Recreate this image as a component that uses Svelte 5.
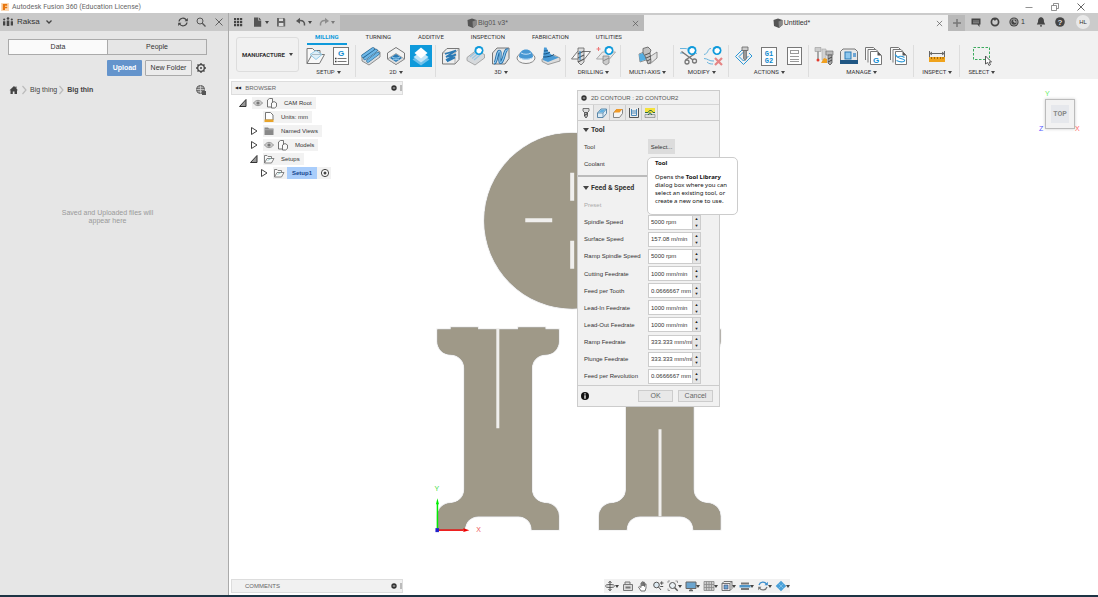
<script lang="ts">
	type Tool = { icon: string; label: string; active?: boolean };
	type Group = { name: string; tools: Tool[] };

	let ribbonTab = $state('MILLING');
	let dialogTab = $state('tool');
	let dataTab = $state('Data');

	const ribbonTabs = ['MILLING', 'TURNING', 'ADDITIVE', 'INSPECTION', 'FABRICATION', 'UTILITIES'];

	const groups: Group[] = [
		{ name: 'SETUP', tools: [{ icon: 'setup', label: 'New setup' }, { icon: 'ncProgram', label: 'NC program' }] },
		{
			name: '2D',
			tools: [
				{ icon: 'face', label: 'Face' },
				{ icon: 'pocket', label: '2D pocket' },
				{ icon: 'contour', label: '2D contour', active: true }
			]
		},
		{
			name: '3D',
			tools: [
				{ icon: 'adaptive', label: 'Adaptive clearing' },
				{ icon: 'flat', label: 'Flat' },
				{ icon: 'parallel', label: 'Parallel' },
				{ icon: 'dome', label: 'Contour' },
				{ icon: 'ramp', label: 'Ramp' }
			]
		},
		{ name: 'DRILLING', tools: [{ icon: 'drill', label: 'Drill' }, { icon: 'holes', label: 'Hole recognition' }] },
		{ name: 'MULTI-AXIS', tools: [{ icon: 'swarf', label: 'Swarf' }] },
		{ name: 'MODIFY', tools: [{ icon: 'trim', label: 'Trim' }, { icon: 'deletePass', label: 'Delete passes' }] },
		{
			name: 'ACTIONS',
			tools: [
				{ icon: 'simulate', label: 'Simulate' },
				{ icon: 'post', label: 'Post process' },
				{ icon: 'sheet', label: 'Setup sheet' }
			]
		},
		{
			name: 'MANAGE',
			tools: [
				{ icon: 'toolLibrary', label: 'Tool library' },
				{ icon: 'machine', label: 'Machine library' },
				{ icon: 'postLibrary', label: 'Post library' },
				{ icon: 'template', label: 'Template library' }
			]
		},
		{ name: 'INSPECT', tools: [{ icon: 'measure', label: 'Measure' }] },
		{ name: 'SELECT', tools: [{ icon: 'select', label: 'Select' }] }
	];

	const tree = [
		{ name: 'CAM Root', level: 0, arrow: 'open', icons: ['eye', 'component'] },
		{ name: 'Units: mm', level: 1, arrow: '', icons: ['units'] },
		{ name: 'Named Views', level: 1, arrow: 'closed', icons: ['folder'] },
		{ name: 'Models', level: 1, arrow: 'closed', icons: ['eye', 'component'] },
		{ name: 'Setups', level: 1, arrow: 'open', icons: ['folderOpen'] },
		{ name: 'Setup1', level: 2, arrow: 'closed', icons: ['folderOpen'], selected: true }
	];

	const dialogTabs = ['tool', 'geometry', 'heights', 'passes', 'linking'];

	const feeds = [
		['Spindle Speed', '5000 rpm'],
		['Surface Speed', '157.08 m/min'],
		['Ramp Spindle Speed', '5000 rpm'],
		['Cutting Feedrate', '1000 mm/min'],
		['Feed per Tooth', '0.0666667 mm'],
		['Lead-In Feedrate', '1000 mm/min'],
		['Lead-Out Feedrate', '1000 mm/min'],
		['Ramp Feedrate', '333.333 mm/min'],
		['Plunge Feedrate', '333.333 mm/min'],
		['Feed per Revolution', '0.0666667 mm']
	];

	const navTools = [
		{ icon: 'orbit', label: 'Orbit', menu: true },
		{ icon: 'lookAt', label: 'Look at', menu: false },
		{ icon: 'pan', label: 'Pan', menu: false },
		{ icon: 'zoom', label: 'Zoom', menu: false },
		{ icon: 'fit', label: 'Fit', menu: true },
		{ icon: 'display', label: 'Display settings', menu: true },
		{ icon: 'grid', label: 'Grid and snaps', menu: true },
		{ icon: 'viewports', label: 'Viewports', menu: true },
		{ icon: 'stock', label: 'Stock', menu: true },
		{ icon: 'refresh', label: 'Regenerate', menu: true },
		{ icon: 'shade', label: 'Shading', menu: true }
	];

	const globe =
		'<circle cx="14" cy="5.500" r="4.500" fill="#0f9adb"/><path d="M11.500 4.500l2-1.500 2.500 .5 1 2-1.500 2.500-2 .5-2-1.500z" fill="#fff"/>';

	// 22 x 22 ribbon icons
	const big: Record<string, string> = {
		setup:
			'<path d="M2 18.500V3.500h5.500l2 2h5.500v3M2 18.500l5-9h12.500l-5 9z" fill="#f8f8f8" stroke="#777"/><path d="M5 9.500l6-4 6 4-6 5z" fill="#cfeaf8" fill-opacity=".6" stroke="#7cc1e4" stroke-width=".8"/>',
		ncProgram:
			'<rect x="3.500" y="2.500" width="15" height="17" fill="#fdfdfd" stroke="#777"/><text x="11" y="10.500" text-anchor="middle" font-family="Liberation Sans" font-weight="700" font-size="8" fill="#0f8ad0">G</text><path d="M7.500 13.500h9M7.500 16.500h9" stroke="#777"/><path d="M5 13.500h1.500M5 16.500h1.500" stroke="#333" stroke-width="1.500"/>',
		face:
			'<path d="M2 12l12-9 6 4v5l-11 8-7-4z" fill="#d9dde0" stroke="#777" stroke-width=".8"/><path d="M3 11L13 4M5 13.500l11-8M8 16l10-7.500" stroke="#1b5e8c" stroke-width="3.400" stroke-linecap="round"/><path d="M3 11L13 4M5 13.500l11-8M8 16l10-7.500" stroke="#6db6e6" stroke-width="2.200" stroke-linecap="round"/>',
		pocket:
			'<path d="M11 2.500l8.500 5.500v6L11 19.500 2.500 14V8z" fill="#f2f2f2" stroke="#777"/><path d="M2.500 14L11 8.500l8.500 5.500L11 19.500z" fill="#e0e0e0" stroke="#888" stroke-width=".7"/><path d="M5 13l6-4 6 4-6 4z" fill="#2a7ab5"/><path d="M7 12c2.500 1.500 5.500 1.500 8 0M8 14c2 1 4 1 6 0" stroke="#9fd2f2" fill="none"/>',
		contour:
			'<path d="M11 8.500l8.500 6-8.500 6-8.500-6z" fill="#6fc0ea"/><path d="M11 6.500l7.500 5.500-7.500 5.500L3.500 12z" fill="#c3e5f7"/><path d="M11 2.500l6.500 5.500-6.500 5.500L4.500 8z" fill="#fff"/>',
		adaptive:
			'<path d="M2.500 8L7 3.500h12v11L15 19H2.500z" fill="#eee" stroke="#777"/><path d="M15 19V8H2.500M15 8l4-4.500" fill="none" stroke="#999" stroke-width=".7"/><path d="M5 9l11-3.500L6 12l10-2.500L6 15l9-2.500-8 4" fill="none" stroke="#2a7ab5" stroke-width="1.600"/>',
		flat:
			'<path d="M2 12.500l9-7 8.500 4v3.500L10 20l-8-4.500z" fill="#d6d9dc" stroke="#999" stroke-width=".8"/><path d="M5 12l6-5M7 13.500l6-5M9 15l6-5" stroke="#9cc5e0" stroke-width="1.200"/>' + globe,
		parallel:
			'<path d="M2.500 8L7 3h12v10.500L15 19H2.500z" fill="#e3e3e3" stroke="#777"/><path d="M4 18c2 0 2-3 3-7s2-6 3-4-1 8 0 10 3-2 4-6 2-7 4-6" fill="none" stroke="#1f6aa5" stroke-width="3"/><path d="M4 18c2 0 2-3 3-7s2-6 3-4-1 8 0 10 3-2 4-6 2-7 4-6" fill="none" stroke="#8cc7ee" stroke-width="1.300"/>',
		dome:
			'<ellipse cx="11" cy="13" rx="9" ry="5.500" fill="#f5f5f5" stroke="#888"/><path d="M4 12C4 2 18 2 18 12c-2 3.500-12 3.500-14 0z" fill="#4697d3"/><path d="M6 8c3 1.700 7 1.700 10 0M4 12.500c4 2.300 10 2.300 14 0" fill="none" stroke="#cfe8f8" stroke-width=".9"/>',
		ramp:
			'<path d="M2 14l12-4 6 3v3l-12 3.500-6-3z" fill="#dcdcdc" stroke="#888" stroke-width=".8"/><path d="M4 2.500h2.500C8 8 12 11 19 12.500L8 17l-5-2z" fill="#4a9bd6"/><path d="M4 6c2 0 3.500-.5 4-1M3.500 9c3 0 5.500-1 6.500-2M3 12c4 .3 9-1 11-2.500" fill="none" stroke="#14507e"/>',
		drill:
			'<path d="M1.500 14l6-7.500h13l-6 7.500z" fill="#f6f6f6" stroke="#777"/><path d="M8 3h6v14l-3 3-3-3z" fill="#dcdcdc" stroke="#666" stroke-width=".8"/><path d="M8 9l6-3M8 13l6-3M8 17l6-3" stroke="#555" stroke-width="1.100"/><path d="M10 6v9" stroke="#2f89c8" stroke-width="1.200"/>',
		holes:
			'<path d="M1.500 14l6-7h13l-6 7z" fill="#e9e9e9" stroke="#aaa"/><path d="M8 11h6v7l-3 2-3-2z" fill="#ccc" stroke="#888" stroke-width=".8"/><path d="M8 16l6-3" stroke="#888"/><path d="M1.500 4h4M3.500 2v4" stroke="#e77"/>' + globe,
		swarf:
			'<path d="M2 9l5-2 7 4 6-4v6l-7 6-4-4-6 2z" fill="#e3e3e3" stroke="#777" stroke-width=".8"/><path d="M2 9.500l5-2 4 4-2 3-6 2z" fill="#55aee2"/><path d="M6 3.500L11 2l3 3-1 3 1 9-3 2-3-8-2-3z" fill="#c2c2c2" stroke="#666" stroke-width=".9"/><path d="M8 10l5-2M9 13l5-2M10 16l4-2" stroke="#555"/>',
		trim:
			'<path d="M2 3.500h5c5 0 5 4 12 5M2 8h4" fill="none" stroke="#69b4dd"/><path d="M3.500 6.500L15 15M16.500 9L7.500 15" stroke="#777" stroke-width="1.500"/><circle cx="9" cy="17" r="2" fill="none" stroke="#777" stroke-width="1.300"/><circle cx="16.500" cy="16" r="2" fill="none" stroke="#777" stroke-width="1.300"/>' + globe,
		deletePass:
			'<path d="M8 3.500c-4 0-2 5-7 6M1 13.500c4 0 5 3 10 2.500M4 17c2 2 4 2 6 2" fill="none" stroke="#69b4dd"/><path d="M12 13l7 7M19 13l-7 7" stroke="#e58585" stroke-width="2.200"/>' + globe,
		simulate:
			'<path d="M2.500 11.500l9-9M2.500 11.500l8 8 8.500-8.500-3-3" fill="none" stroke="#2c97d6"/><path d="M6 11.500l5-5M6 11.500l4.500 4.500 5-5" fill="none" stroke="#2c97d6"/><path d="M9 2h6v3.500H9z" fill="#ccc" stroke="#666" stroke-width=".8"/><path d="M10.500 5.500h3v8L12 15.500l-1.500-2z" fill="#999" stroke="#666" stroke-width=".7"/>',
		post:
			'<rect x="3.500" y="2.500" width="15" height="18" fill="#fdfdfd" stroke="#777"/><text x="11" y="10.500" text-anchor="middle" font-family="Liberation Mono" font-weight="700" font-size="7" fill="#0f8ad0">G1</text><text x="11" y="17.500" text-anchor="middle" font-family="Liberation Mono" font-weight="700" font-size="7" fill="#0f8ad0">G2</text>',
		sheet:
			'<rect x="4.500" y="2.500" width="14" height="17" fill="#fdfdfd" stroke="#777"/><rect x="7.500" y="5.500" width="8" height="3" fill="none" stroke="#999"/><path d="M7 11.500h9M7 14.500h9M7 16.500h9" stroke="#999"/>',
		toolLibrary:
			'<path d="M2 2.500h6v4H2z" fill="#ccc" stroke="#999" stroke-width=".6"/><path d="M5 6.500v8" stroke="#777" stroke-width="1.200"/><circle cx="5" cy="15" r="1.500" fill="#e23c2e"/><path d="M9 4h4v11H9z" fill="#d2d2d2" stroke="#aaa" stroke-width=".6"/><path d="M8 18l3-5 3 1v4z" fill="#f0a020"/><path d="M13 6h7v4h-7z" fill="#bbb" stroke="#777" stroke-width=".7"/><path d="M15 10h4v8l-2 2-2-2z" fill="#aaa" stroke="#555" stroke-width=".8"/><path d="M15 14l4-2M15 17l4-2" stroke="#444"/>',
		machine:
			'<path d="M2.500 16V6.500L5 4h12l2.500 2.500V16z" fill="#e8e8e8" stroke="#777"/><rect x="7" y="7" width="6" height="7" fill="#8cc7ee" stroke="#2a7ab5"/><rect x="15" y="8" width="3" height="4" fill="#6da5d3"/><path d="M2 15h18v4H2z" fill="#1f5684"/>',
		postLibrary:
			'<path d="M2.500 15V2.500h8L13 5M5 17.500V4.500h8l2 2" fill="#fafafa" stroke="#777"/><path d="M7.500 6.500h7l4 4v9h-11z" fill="#fff" stroke="#777"/><path d="M14.500 6.500l4 4h-4z" fill="#555"/><text x="13" y="18" text-anchor="middle" font-family="Liberation Sans" font-weight="700" font-size="8" fill="#0f8ad0">G</text>',
		template:
			'<path d="M2.500 15V2.500h8L13 5M5 17.500V4.500h8l2 2" fill="#fafafa" stroke="#777"/><path d="M7.500 6.500h7l4 4v9h-11z" fill="#fff" stroke="#777"/><path d="M14.500 6.500l4 4h-4z" fill="#555"/><path d="M16.500 12.500c-3-2-7-1.500-6 0s5 1 6 2.500-3 3-8 .5M7 9.500l3 3" fill="none" stroke="#2c97d6" stroke-width="1.100"/>',
		measure:
			'<path d="M3.500 6v6M18.500 6v6M4 8.500h14M6 7l-2 1.500 2 1.500M16 7l2 1.500-2 1.500" fill="none" stroke="#666"/><path d="M3 12h16v5H3z" fill="#f0a31c"/><path d="M5.500 12v2M8.500 12v2M11.500 12v2M14.500 12v2M17 12v2" stroke="#a36808"/>',
		select:
			'<rect x="2.500" y="2.500" width="16" height="12" fill="none" stroke="#3cab5e" stroke-dasharray="2.500 1.500"/><path d="M14.500 11v8l2-1.500 1.500 3 1.500-1-1.500-2.500h2.500z" fill="#fff" stroke="#444" stroke-width=".9"/>'
	};

	// 12 x 12 icons of the panels and bars
	const small: Record<string, string> = {
		people:
			'<circle cx="6" cy="2.500" r="1.300"/><circle cx="2.200" cy="3.500" r="1.100"/><circle cx="9.800" cy="3.500" r="1.100"/><path d="M4.700 4.500h2.600V10H4.700zM1 5.200h2.300V9.500H1zM8.700 5.200H11v4.300H8.700z"/>',
		sync:
			'<path d="M2 5.500A4 4 0 0 1 9.300 4M10 6.500A4 4 0 0 1 2.700 8" fill="none" stroke="#444" stroke-width="1.200"/><path d="M10.800 2v3.200H7.600zM1.200 10V6.800h3.200z"/>',
		search: '<circle cx="5" cy="5" r="3" fill="none" stroke="#555"/><path d="M7.300 7.300L10.500 10.500" stroke="#555" stroke-width="1.300"/>',
		close: '<path d="M2.500 2.500l7 7M9.500 2.500l-7 7" stroke="#555" stroke-width=".9"/>',
		chevron: '<path d="M3.500 4.500l2.500 2.500 2.500-2.500" fill="none" stroke="#444" stroke-width="1.300"/>',
		gear:
			'<circle cx="6" cy="6" r="3.300" fill="none" stroke="#444" stroke-width="1.300"/><circle cx="6" cy="6" r="1" /><path d="M6 1v2M6 9v2M1 6h2M9 6h2M2.500 2.500l1.300 1.300M8.200 8.200l1.300 1.300M9.500 2.500L8.200 3.800M3.800 8.200L2.500 9.500" stroke="#444" stroke-width="1.300"/>',
		home: '<path d="M6 2L1.500 6.200h1V10h2.300V7.500h1.700V10h2.500V6.200H10L8.500 4.700V2.500H7.500v1z"/>',
		next: '<path d="M4.500 2l3.500 4-3.500 4" fill="none" stroke="#bbb" stroke-width="1.200"/>',
		world:
			'<circle cx="5.500" cy="5.500" r="4" fill="#777" stroke="#555"/><path d="M1.500 5.500h8M5.500 1.500v8M2.500 3.200h6M2.500 7.800h6" stroke="#ddd" stroke-width=".7"/><path d="M7 7h4v4H7z" fill="#555"/>',
		apps: '<path d="M2 2h2.200v2.200H2zM5 2h2.200v2.200H5zM8 2h2.200v2.200H8zM2 5h2.200v2.200H2zM5 5h2.200v2.200H5zM8 5h2.200v2.200H8zM2 8h2.200v2.200H2zM5 8h2.200v2.200H5zM8 8h2.200v2.200H8z"/>',
		file: '<path d="M2 1.500h4.200v3h3v6.300H2z" fill="#555"/><path d="M6.900 1.500l2.300 2.300H6.900z"/>',
		save: '<path d="M2 2h7.200l1 1v7.500H2z" fill="#666"/><path d="M4 2.500h4v2.500H4zM3.800 7h4.600v3H3.800z" fill="#ddd"/>',
		undo: '<path d="M4 4.500c4-.5 6 1.500 5.500 5" fill="none" stroke="#555" stroke-width="1.500"/><path d="M1 5l4-3.300v6z" fill="#555"/>',
		redo: '<path d="M8 4.500C4 4 2 6 2.500 9.500" fill="none" stroke="#666" stroke-width="1.500"/><path d="M11 5L7 1.700v6z" fill="#666"/>',
		cube: '<path d="M1.500 3L6 1.500 10.500 3v5L7 11 2 9z" fill="#555"/><path d="M6.500 4.500l4-1.500v5L7 11z" fill="#888"/>',
		plus: '<path d="M6 2v8M2 6h8" stroke="#777" stroke-width="1.500"/>',
		chat: '<path d="M1.500 2.500h9v6h-1v2.500L7.500 8.500h-6z"/><path d="M3 5h6M3 6.800h6" stroke="#ccc" stroke-width=".6"/>',
		extension: '<circle cx="6" cy="6" r="3.600" fill="none" stroke="#444" stroke-width="1.700"/><path d="M3 2l3 3 2-3z"/>',
		clock: '<circle cx="6" cy="6" r="4.600"/><circle cx="6" cy="6" r="3.200" fill="none" stroke="#ccc" stroke-width=".6"/><path d="M6 3.500V6h2.500" fill="none" stroke="#ddd"/>',
		bell: '<path d="M5.400 1.200h1.200c2 .7 2.400 2.300 2.400 4.800l1.200 2.500H1.800L3 6c0-2.500.4-4.100 2.400-4.800zM5 9.200h2v1.400H5z"/>',
		help: '<circle cx="6" cy="6" r="4.800"/><text x="6" y="9" text-anchor="middle" font-family="Liberation Sans" font-weight="700" font-size="8" fill="#ddd">?</text>',
		minimize: '<path d="M2.500 6.500h7" stroke="#777" stroke-width=".8"/>',
		restore: '<path d="M2.500 4.500h5v5h-5zM4.500 4.500v-2h5v5h-2" fill="none" stroke="#777" stroke-width=".8"/>',
		eye: '<path d="M1.500 6c2.500-3.500 6.500-3.500 9 0-2.500 3.500-6.500 3.500-9 0z" fill="#ccc" stroke="#999"/><circle cx="6" cy="6" r="1.600" fill="#777"/>',
		component:
			'<path d="M1.500 10V3l2-1.500h3V10z" fill="#fafafa" stroke="#666" stroke-width=".9"/><path d="M5.500 11V6l2.500-1.500 2.500 1.500v3.500L8.500 11z" fill="#fafafa" stroke="#666" stroke-width=".9"/>',
		units: '<path d="M2.500 1.500h5l2.500 2.500v5h-7.500z" fill="#fff" stroke="#666" stroke-width=".9"/><path d="M1.500 8.500h9v2.500h-9z" fill="#e8a42a"/>',
		folder: '<path d="M1.500 2.500h3.500l1 1h4.500V10h-9z" fill="#888"/><path d="M1.500 4.700h9" stroke="#bbb" stroke-width=".6"/>',
		folderOpen: '<path d="M1.500 10V2.500H4l1 1h3.500V5M1.500 10L4 5.500h7L8.500 10z" fill="#fafafa" stroke="#777" stroke-width=".9"/><path d="M4.500 7.500L8 5.500" stroke="#6bb" stroke-width=".6"/>',
		target: '<circle cx="6" cy="6" r="3.600" fill="#fff" stroke="#444"/><circle cx="6" cy="6" r="1.500"/>',
		tool: '<path d="M3 1.500h6V4L7.500 5.500h-3L3 4z" fill="#ddd" stroke="#666" stroke-width=".9"/><path d="M4.500 5.500h3V9L6 11 4.500 9z" fill="#bbb" stroke="#555" stroke-width=".9"/><path d="M4.500 8.500l3-2" stroke="#333"/>',
		geometry: '<path d="M1.500 6l3.500-4h5.500v4.500L7 10.500H1.500z" fill="#dcebf5" stroke="#4c7da0" stroke-width=".9"/><path d="M1.500 6H7v4.500M7 6l3.500-4" fill="none" stroke="#4c7da0" stroke-width=".7"/><path d="M5.200 2.500h4.500L7 5.500H2.600z" fill="#62b0e0"/>',
		heights: '<path d="M1.500 6l3-3.500h6v4l-3 4h-6z" fill="#f4f4f4" stroke="#777" stroke-width=".9"/><path d="M1.500 5.500l3-3.500h6l-3 3.500z" fill="#f19a26"/>',
		passes: '<path d="M1.500 1v9.500h9V1" fill="#eee" stroke="#555"/><path d="M3.500 2v6.500h5V2M3.500 4h5M3.500 6h5" fill="none" stroke="#3a7fb5" stroke-width=".9"/>',
		linking: '<path d="M1 1h10v5H1z" fill="#f4e23c"/><path d="M1 7.500h10v3H1z" fill="#ddd" stroke="#777" stroke-width=".6"/><path d="M1 5.500h3l1.500-2h2L9 5.500h2M4 8l2-2.500L8 8" fill="none" stroke="#2b6b48"/>',
		info: '<circle cx="6" cy="6" r="4" fill="#111"/><path d="M6 3.200v1.300M6 5.300v3.500" stroke="#fff" stroke-width="1.300"/>',
		dot: '<circle cx="6" cy="6" r="2.700" fill="#333"/><path d="M4.800 6h2.400" stroke="#ddd" stroke-width=".9"/>',
		orbit: '<path d="M6 1.500v9M4.500 3L6 1.200 7.500 3M4.500 9L6 10.800 7.500 9" fill="none" stroke="#555"/><ellipse cx="6" cy="6" rx="4.600" ry="1.500" fill="none" stroke="#555"/>',
		lookAt: '<path d="M1.500 4.500h9v6h-9zM3 4V2h5v2" fill="#ddd" stroke="#777"/><path d="M3.500 6.500h5v2h-5z" fill="#777"/>',
		pan: '<path d="M4 11L1.500 7l1-.7L4 7.500V3l1-.3V6l.2-4.200h1V6l.3-3.700h1V6.500l.6-2.600h.9L9 8 8 11z" fill="#fff" stroke="#555" stroke-width=".8"/>',
		zoom: '<circle cx="4.500" cy="5" r="2.800" fill="#ddeaf2" stroke="#555"/><path d="M6.500 7L9 10M8 3h3.500M9.700 1.300v3.500M8.200 6.500h3" stroke="#555"/>',
		fit: '<path d="M1 3V1h2M8.500 1h2v2M1 8.500v2h2" fill="none" stroke="#888" stroke-width=".8"/><circle cx="5.500" cy="5.500" r="3" fill="#e9f0f4" stroke="#555"/><path d="M7.700 7.700l3 3" stroke="#555" stroke-width="1.400"/>',
		display: '<path d="M1 2h10v6.500H1z" fill="#6ba5cf" stroke="#666"/><path d="M4 10.500h4M6 8.500v2" stroke="#666" stroke-width="1.300"/>',
		grid: '<path d="M1 1.500h10v9H1z" fill="#ccc"/><path d="M1 1.500h10v9H1zM3.500 1.500v9M6 1.500v9M8.500 1.500v9M1 4.500h10M1 7.500h10" fill="none" stroke="#888" stroke-width=".8"/>',
		viewports: '<path d="M1 3.500L3 1.500h8v7L9 10.500H1zM1 3.500h8v7M9 3.500l2-2" fill="#eee" stroke="#666" stroke-width=".9"/><path d="M3 5h4v4H3z" fill="#6ba5cf" stroke="#336" stroke-width=".5"/>',
		stock: '<path d="M2 2.500h8v2H2zM2 8h8v2H2z" fill="#777"/><path d="M.5 5h11v2.500H.5z" fill="#4d94c8"/>',
		refresh: '<path d="M2 5A4.200 4.200 0 0 1 9.500 4" fill="none" stroke="#3a8dcc" stroke-width="1.300"/><path d="M10 7A4.200 4.200 0 0 1 2.500 8" fill="none" stroke="#777" stroke-width="1.300"/><path d="M10.800 1.800v3.400H7.500z" fill="#3a8dcc"/><path d="M1.200 10.200V6.800h3.300z" fill="#777"/>',
		shade: '<path d="M6 .8L11.300 6 6 11.200.7 6z" fill="#49a0d8"/><path d="M3.400 3.400l5.300 5.300M8.600 3.400L3.300 8.700" stroke="#8fcbee" stroke-width=".7"/>'
	};
</script>

{#snippet icon(name: string)}
	<svg class="icon" viewBox="0 0 12 12" fill="#444" aria-hidden="true">{@html small[name]}</svg>
{/snippet}

<div class="app">
	<header class="title-bar">
		<svg class="logo" viewBox="0 0 9 9" aria-hidden="true">
			<path d="M0 0h9v9H0z" fill="#fbd9b5" />
			<path d="M2 8V1h5v2H4.500v1.200H7v1.600H4.500V8z" fill="#e8750c" />
		</svg>
		<span class="app-name">Autodesk Fusion 360 (Education License)</span>
		<div class="window-buttons">
			<button aria-label="Minimize">{@render icon('minimize')}</button>
			<button aria-label="Restore">{@render icon('restore')}</button>
			<button aria-label="Close">{@render icon('close')}</button>
		</div>
	</header>

	<div class="main">
		<aside class="data-panel">
			<div class="data-header">
				<button class="team">
					{@render icon('people')}
					<span>Raksa</span>
					{@render icon('chevron')}
				</button>
				<div class="data-tools">
					<button aria-label="Refresh">{@render icon('sync')}</button>
					<button aria-label="Search">{@render icon('search')}</button>
					<button aria-label="Close data panel">{@render icon('close')}</button>
				</div>
			</div>
			<div class="data-body">
				<div class="segmented">
					{#each ['Data', 'People'] as tab}
						<button class:current={dataTab === tab} onclick={() => (dataTab = tab)}>{tab}</button>
					{/each}
				</div>
				<div class="data-actions">
					<button class="upload">Upload</button>
					<button class="new-folder">New Folder</button>
					<button class="plain" aria-label="Settings">{@render icon('gear')}</button>
				</div>
				<nav class="crumbs" aria-label="Folders">
					<a href="#home" aria-label="Home">{@render icon('home')}</a>
					<span class="next">{@render icon('next')}</span>
					<a href="#big-thing">Big thing</a>
					<span class="next">{@render icon('next')}</span>
					<a href="#big-thin" class="here">Big thin</a>
					<button class="plain" aria-label="Open on the web">{@render icon('world')}</button>
				</nav>
				<p class="empty">Saved and Uploaded files will<br />appear here</p>
			</div>
		</aside>

		<section class="workspace">
			<div class="quick-bar">
				<div class="quick-tools">
					<button aria-label="Data panel">{@render icon('apps')}</button>
					<button class="menu" aria-label="File">{@render icon('file')}<i class="caret"></i></button>
					<button aria-label="Save">{@render icon('save')}</button>
					<button class="menu" aria-label="Undo">{@render icon('undo')}<i class="caret"></i></button>
					<button class="menu dim" aria-label="Redo">{@render icon('redo')}<i class="caret"></i></button>
				</div>
				<div class="doc-tab">
					<button class="doc-name">{@render icon('cube')}Big01 v3*</button>
					<button class="doc-close" aria-label="Close Big01 v3">{@render icon('close')}</button>
				</div>
				<div class="doc-tab active">
					<button class="doc-name">{@render icon('cube')}Untitled*</button>
					<button class="doc-close" aria-label="Close Untitled">{@render icon('close')}</button>
				</div>
				<div class="account">
					<button class="add" aria-label="New design">{@render icon('plus')}</button>
					<button aria-label="Notes">{@render icon('chat')}</button>
					<button aria-label="Extensions">{@render icon('extension')}</button>
					<button class="jobs" aria-label="Job status">{@render icon('clock')}<span>1</span></button>
					<button aria-label="Notifications">{@render icon('bell')}</button>
					<button aria-label="Help">{@render icon('help')}</button>
					<button class="avatar">HL</button>
				</div>
			</div>

			<div class="ribbon">
				<button class="workspace-switch">MANUFACTURE<i class="caret"></i></button>
				<div class="toolbox">
					<div class="ribbon-tabs">
						{#each ribbonTabs as tab}
							<button class:current={ribbonTab === tab} onclick={() => (ribbonTab = tab)}>{tab}</button>
						{/each}
					</div>
					<div class="groups">
						{#each groups as group}
							<div class="group">
								<div class="tools">
									{#each group.tools as tool}
										<button class="tool" class:active={tool.active} aria-label={tool.label}>
											<svg viewBox="0 0 22 22" fill="none" aria-hidden="true">{@html big[tool.icon]}</svg>
										</button>
									{/each}
								</div>
								<button class="group-name">{group.name}<i class="caret"></i></button>
							</div>
						{/each}
					</div>
				</div>
			</div>

			<div class="canvas">
				<svg class="model" viewBox="229 78 869 517" aria-hidden="true">
					<defs>
						<path
							id="leg-outline"
							d="M437 329h13.500v-2h27v2h40.500v-2h27v2H558.500v12a13 13 0 0 1-13 13a14 14 0 0 0-14 14V489a14 14 0 0 0 14 14a13 13 0 0 1 13 13V529.500H531.500a13.500 13.500 0 0 0-13.500-13.500h-40a13.500 13.500 0 0 0-13.500 13.500H437V516a13 13 0 0 1 13-13a14 14 0 0 0 14-14V368a14 14 0 0 0-14-14a13 13 0 0 1-13-13z"
						/>
					</defs>
					<g stroke="#ddd" stroke-width="2" stroke-opacity=".6">
						<circle cx="572" cy="220" r="88" />
						<use href="#leg-outline" />
						<use href="#leg-outline" x="162" />
					</g>
					<g fill="#9f9988">
						<circle cx="572" cy="220" r="88" />
						<use href="#leg-outline" />
						<use href="#leg-outline" x="162" />
					</g>
					<g fill="#f0efed">
						<path d="M570 172h4v28h-4zM570 240h4v28h-4zM525 217.500h27v4h-27z" />
						<path d="M496 328h3v100h-3zM658.500 429h3v87h-3z" />
					</g>
					<path d="M437 530V503" stroke="#0e0" stroke-width="1.500" />
					<path d="M435.500 504l1.500-6 1.500 6z" fill="#0e0" />
					<path d="M437 530h26" stroke="#e00" stroke-width="1.500" />
					<path d="M463 528l6 2-6 2z" fill="#e00" />
					<path d="M435 528h3.500v4H435z" fill="#22c" />
					<text x="434" y="491" fill="#4d4">Y</text>
					<text x="476" y="532" fill="#e55">X</text>
				</svg>

				<div class="browser">
					<div class="bar">
						<span class="collapse">◀◀</span>
						<h2>BROWSER</h2>
						{@render icon('dot')}
						<i class="grip"></i>
					</div>
					<ul class="tree">
						{#each tree as node}
							<li class="level-{node.level}">
								<svg class="arrow" viewBox="0 0 10 10" aria-hidden="true">
									{#if node.arrow === 'open'}
										<path d="M1.500 8.500L8 1.500v7z" fill="#999" stroke="#333" />
									{:else if node.arrow === 'closed'}
										<path d="M2.500 1.500L8 5 2.500 8.500z" fill="#fff" stroke="#444" />
									{/if}
								</svg>
								<div class="chip">
									{#each node.icons as name}{@render icon(name)}{/each}
									<span class:selected={node.selected}>{node.name}</span>
									{#if node.selected}{@render icon('target')}{/if}
								</div>
							</li>
						{/each}
					</ul>
				</div>

				<div class="cube">
					<span class="axis y">Y</span>
					<button><span>TOP</span></button>
					<span class="axis z">Z</span>
					<span class="axis x">X</span>
				</div>

				<div class="dialog" role="dialog" aria-label="2D Contour">
					<div class="dialog-title">{@render icon('dot')}2D CONTOUR : 2D CONTOUR2</div>
					<div class="dialog-tabs">
						{#each dialogTabs as tab}
							<button class:current={dialogTab === tab} aria-label={tab} onclick={() => (dialogTab = tab)}>
								{@render icon(tab)}
							</button>
						{/each}
					</div>
					<button class="section"><i class="caret"></i>Tool</button>
					<div class="field">
						<label for="select-tool">Tool</label>
						<button id="select-tool" class="pick">Select...</button>
					</div>
					<div class="field"><span>Coolant</span></div>
					<hr />
					<button class="section"><i class="caret"></i>Feed &amp; Speed</button>
					<div class="field off"><span>Preset</span></div>
					{#each feeds as [name, value], i}
						<div class="field">
							<label for="feed-{i}">{name}</label>
							<input id="feed-{i}" type="text" {value} />
							<div class="spin">
								<button aria-label="Increase {name}">▲</button>
								<button aria-label="Decrease {name}">▼</button>
							</div>
						</div>
					{/each}
					<div class="dialog-footer">
						{@render icon('info')}
						<button>OK</button>
						<button>Cancel</button>
					</div>
					<div class="tooltip" role="tooltip">
						<strong>Tool</strong>
						<p>Opens the <b>Tool Library</b><br />dialog box where you can<br />select an existing tool, or<br />create a new one to use.</p>
					</div>
				</div>

				<div class="canvas-footer">
					<div class="bar">
						<h2>COMMENTS</h2>
						{@render icon('dot')}
						<i class="grip"></i>
					</div>
					<div class="nav-bar">
						{#each navTools as tool}
							<button aria-label={tool.label}>
								{@render icon(tool.icon)}{#if tool.menu}<i class="caret"></i>{/if}
							</button>
						{/each}
					</div>
				</div>
			</div>
		</section>
	</div>
	<div class="taskbar"></div>
</div>

<style>
	:global(body) {
		margin: 0;
	}

	.app {
		display: flex;
		flex-direction: column;
		min-height: 100vh;
		background: #fff;
		color: #333;
		font-family: 'Liberation Sans', Arial, sans-serif;
		font-size: 7px;
		line-height: 8px;
	}

	.app * {
		box-sizing: border-box;
	}

	button {
		display: flex;
		align-items: center;
		justify-content: center;
		margin: 0;
		padding: 0;
		border: 0;
		background: none;
		color: inherit;
		font: inherit;
		cursor: pointer;
		white-space: nowrap;
	}

	.icon {
		display: block;
		width: 12px;
		height: 12px;
		flex: none;
	}

	.caret {
		border: 2px solid transparent;
		border-top: 3px solid #444;
		border-bottom: 0;
		flex: none;
	}

	/* title bar */
	.title-bar {
		display: flex;
		align-items: center;
		height: 13px;
		padding: 0 11px 0 1px;
	}

	.logo {
		width: 8px;
		height: 8px;
		margin-right: 3px;
	}

	.app-name {
		flex: 1;
		color: #666;
		font-family: Roboto, sans-serif;
		font-size: 7px;
	}

	.window-buttons {
		display: flex;
		gap: 14px;
	}

	.main {
		display: flex;
		flex: 1;
	}

	/* data panel */
	.data-panel {
		width: 229px;
		flex: none;
		border-right: 1px solid #aaa;
		background: #e6e6e6;
	}

	.data-header {
		display: flex;
		align-items: center;
		justify-content: space-between;
		height: 18px;
		padding: 0 3px 0 2px;
		background: #c9c9c9;
	}

	.team {
		gap: 3px;
		font-size: 8px;
	}

	.data-tools {
		display: flex;
		gap: 6px;
	}

	.data-body {
		padding: 8px 21px 0 8px;
	}

	.segmented {
		display: flex;
		height: 16px;
		border: 1px solid #aaa;
	}

	.segmented button {
		flex: 1;
	}

	.segmented button.current {
		border-right: 1px solid #aaa;
		background: #fafafa;
	}

	.data-actions {
		display: flex;
		justify-content: flex-end;
		gap: 3px;
		margin-top: 5px;
	}

	.upload {
		width: 35px;
		height: 16px;
		border-radius: 1px;
		background: #6494cc;
		color: #fff;
		font-weight: 700;
	}

	.new-folder {
		width: 47px;
		height: 16px;
		border: 1px solid #aaa;
		border-radius: 1px;
		background: #ececec;
	}

	.crumbs {
		display: flex;
		align-items: center;
		margin-top: 8px;
	}

	.crumbs a {
		color: #444;
		text-decoration: none;
	}

	.crumbs .next {
		margin-left: -2px;
	}

	.crumbs .here {
		font-weight: 700;
	}

	.crumbs .plain {
		margin-left: auto;
	}

	.empty {
		margin: 113px 0 0;
		color: #999;
		text-align: center;
	}

	/* quick access bar and document tabs */
	.workspace {
		display: flex;
		flex: 1;
		flex-direction: column;
		min-width: 0;
	}

	.quick-bar {
		display: flex;
		align-items: flex-end;
		height: 18px;
		background: #cbcbcb;
	}

	.quick-tools {
		display: flex;
		align-items: center;
		width: 111px;
		height: 18px;
		gap: 8px;
		padding-left: 3px;
	}

	.menu {
		gap: 1px;
	}

	.quick-tools .menu {
		margin-right: -2px;
	}

	.dim {
		opacity: 0.6;
	}

	.doc-tab {
		display: grid;
		flex: 1;
		grid-template-columns: 1fr auto 1fr;
		align-items: center;
		height: 16px;
		background: #b9b9b9;
		color: #555;
	}

	.doc-tab.active {
		background: #f1f1f1;
		color: #333;
	}

	.doc-name {
		grid-column: 2;
		padding-right: 10px;
	}

	.doc-close {
		justify-self: end;
		padding-right: 4px;
	}

	.doc-close .icon {
		width: 9px;
		height: 9px;
	}

	.account {
		display: flex;
		align-items: center;
		gap: 7px;
		width: 150px;
		height: 18px;
		padding-right: 8px;
	}

	.add {
		width: 17px;
		height: 16px;
		margin-right: -2px;
		align-self: flex-end;
		background: #b9b9b9;
	}

	.jobs {
		gap: 1px;
		margin-right: 3px;
	}

	.avatar {
		width: 14px;
		height: 14px;
		margin-left: auto;
		border-radius: 50%;
		background: #e8e8e8;
		font-size: 6px;
	}

	/* ribbon */
	.ribbon {
		display: flex;
		height: 48px;
		padding-left: 7px;
		background: #f1f1f1;
		font-family: Roboto, sans-serif;
		font-size: 6px;
	}

	.workspace-switch {
		gap: 4px;
		width: 63px;
		height: 35px;
		margin-top: 6px;
		border: 1px solid #ddd;
		border-radius: 3px;
		font-weight: 700;
	}

	.toolbox {
		flex: 1;
		padding-left: 2px;
	}

	.ribbon-tabs {
		display: flex;
		gap: 11px;
		height: 14px;
		padding-left: 6px;
	}

	.ribbon-tabs button {
		padding: 0 8px;
		border-bottom: 2px solid transparent;
	}

	.ribbon-tabs button.current {
		border-color: #0f9adb;
		color: #0f9adb;
		font-weight: 700;
	}

	.groups {
		display: flex;
	}

	.group {
		display: flex;
		flex-direction: column;
		align-items: center;
		padding: 0 3px 0 4px;
		border-right: 1px solid #ddd;
	}

	.group:last-child {
		border: 0;
	}

	.tools {
		display: flex;
		gap: 3px;
	}

	.tool {
		width: 22px;
		height: 22px;
	}

	.tool svg {
		display: block;
		width: 22px;
		height: 22px;
	}

	.tool.active {
		background: #0f9adb;
	}

	.group-name {
		gap: 2px;
		height: 10px;
		padding: 0 4px;
	}

	/* canvas */
	.canvas {
		position: relative;
		display: flex;
		flex: 1;
		flex-direction: column;
		justify-content: space-between;
		padding: 2px;
		background: #fff;
	}

	.model {
		position: absolute;
		inset: 0;
		width: 100%;
		height: 100%;
		font-size: 7px;
	}

	.browser,
	.canvas-footer {
		position: relative;
	}

	.bar {
		display: flex;
		align-items: center;
		width: 172px;
		height: 14px;
		padding: 0 0 0 3px;
		border: 1px solid #ddd;
		background: #f1f1f1;
	}

	.bar h2 {
		flex: 1;
		margin: 0 0 0 10px;
		color: #666;
		font-size: 6px;
		font-weight: 400;
	}

	.bar .collapse + h2 {
		margin-left: 4px;
	}

	.collapse {
		font-family: 'DejaVu Sans', sans-serif;
		font-size: 4px;
		color: #222;
	}

	.grip {
		width: 2px;
		height: 6px;
		background: #bbb;
	}

	.tree {
		margin: 1px 0 0;
		padding: 0 0 0 7px;
		list-style: none;
		font-size: 6px;
	}

	.tree li {
		display: flex;
		align-items: center;
		gap: 4px;
		height: 14px;
	}

	.tree .level-1 {
		padding-left: 11px;
	}

	.tree .level-2 {
		padding-left: 21px;
	}

	.arrow {
		width: 10px;
		height: 10px;
	}

	.chip {
		display: flex;
		align-items: center;
		gap: 2px;
		height: 12px;
		background: #f2f2f2;
	}

	.chip span {
		padding: 2px 4px;
	}

	.chip .selected {
		padding: 2px 5px;
		background: #a9cdfb;
		color: #14458c;
		font-weight: 700;
	}

	.cube {
		position: absolute;
		top: 11px;
		right: 17px;
		display: grid;
		grid-template-columns: 6px 30px 6px;
		grid-template-rows: 9px 26px 4px 4px;
		font-size: 7px;
	}

	.cube button {
		grid-area: 2 / 2 / 4 / 3;
		border: 1px solid #bbb;
		background: #f2f2f2;
		box-shadow: 0 0 3px #ccc;
		color: #888;
		font-family: Roboto, sans-serif;
		font-weight: 700;
	}

	.cube button span {
		padding: 5px 2px;
		background: #e6e8ec;
	}

	.axis.y {
		grid-area: 1 / 2;
		color: #6e6;
	}

	.axis.z {
		grid-area: 3 / 1 / 5 / 2;
		color: #55f;
	}

	.axis.x {
		grid-area: 3 / 3 / 5 / 4;
		color: #f66;
	}

	/* operation dialog */
	.dialog {
		position: absolute;
		top: 11px;
		left: 348px;
		display: flex;
		flex-direction: column;
		width: 143px;
		height: 317px;
		border: 1px solid #ccc;
		background: #f1f1f1;
		font-size: 6px;
	}

	.dialog-title {
		display: flex;
		align-items: center;
		gap: 1px;
		height: 14px;
		border-bottom: 1px solid #d5d5d5;
		color: #555;
	}

	.dialog-tabs {
		display: flex;
		height: 16px;
		border-bottom: 1px solid #ccc;
	}

	.dialog-tabs button {
		width: 16px;
		border-right: 1px solid #ccc;
		background: #e8e8e8;
	}

	.dialog-tabs button.current {
		background: #f1f1f1;
	}

	.section {
		justify-content: flex-start;
		gap: 2px;
		height: 17px;
		padding-left: 5px;
		font-family: Roboto, sans-serif;
		font-size: 7px;
		font-weight: 700;
	}

	.section .caret {
		border-width: 4px 3px 0;
	}

	.field {
		display: flex;
		flex: 1;
		align-items: center;
		padding-left: 6px;
	}

	.field > :first-child {
		width: 64px;
	}

	.off {
		color: #aaa;
	}

	.pick {
		width: 27px;
		height: 15px;
		background: #dcdcdc;
	}

	input {
		width: 45px;
		height: 15px;
		padding: 0 0 0 2px;
		border: 1px solid #ccc;
		background: #fff;
		color: #333;
		font: inherit;
	}

	.spin {
		display: flex;
		flex-direction: column;
		width: 8px;
		height: 15px;
		border: 1px solid #ccc;
		border-left: 0;
		background: #e6e6e6;
	}

	.spin button {
		flex: 1;
		font-size: 4px;
		line-height: 5px;
		color: #222;
	}

	hr {
		width: 100%;
		height: 2px;
		margin: 3px 0 2px;
		border: 0;
		background: #bbb;
	}

	.dialog-footer {
		display: flex;
		align-items: center;
		gap: 5px;
		height: 21px;
		padding: 0 6px 0 1px;
		border-top: 1px solid #ccc;
		color: #666;
		font-size: 7px;
	}

	.dialog-footer .icon {
		margin-right: auto;
	}

	.dialog-footer button {
		width: 35px;
		height: 12px;
		border: 1px solid #ccc;
		background: #e8e8e8;
	}

	.tooltip {
		position: absolute;
		top: 66px;
		left: 69px;
		width: 91px;
		height: 58px;
		padding: 1px 7px;
		border: 1px solid #ccc;
		border-radius: 5px;
		background: #fff;
		color: #111;
		font-family: 'Noto Sans', sans-serif;
		white-space: nowrap;
	}

	.tooltip p {
		margin: 6px 0 0;
	}

	/* bottom bars */
	.canvas-footer {
		display: flex;
		gap: 201px;
	}

	.nav-bar {
		display: flex;
		align-items: center;
		gap: 3px;
		height: 14px;
		background: #f1f1f1;
	}

	.nav-bar .caret {
		margin-left: -1px;
	}

	.taskbar {
		height: 2px;
		background: #1d3444;
	}
</style>
